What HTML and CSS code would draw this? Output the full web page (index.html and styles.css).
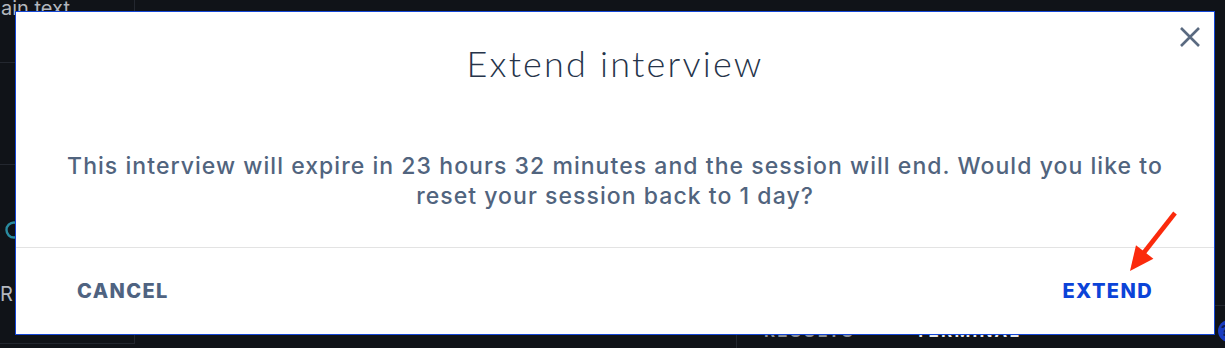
FILE: index.html
```html
<!DOCTYPE html>
<html lang="en">
<head>
<meta charset="utf-8">
<title>Extend interview</title>
<link rel="stylesheet" href="styles.css">
</head>
<body>
<div class="app">
  <aside class="sidebar">
    <div class="side-section side-top"><span class="side-label">ain text</span></div>
    <div class="side-section side-mid"></div>
    <div class="side-section side-bottom">
      <svg class="side-icon" width="20" height="20" viewBox="0 0 20 20"><circle cx="10" cy="10" r="7.5" fill="none" stroke="#2a8ba0" stroke-width="2.4"/></svg>
      <span class="side-label side-r">R</span>
    </div>
  </aside>
  <main class="main">
    <div class="workspace"></div>
    <div class="bottom-row">
      <div class="bottom-left"></div>
      <div class="tabbar">
        <span class="tab">RESULTS</span>
        <span class="tab tab-active">TERMINAL</span>
        <span class="help">?</span>
      </div>
    </div>
  </main>
</div>

<div class="modal" role="dialog" aria-labelledby="modal-title">
  <button class="modal-close" aria-label="Close">
    <svg width="22" height="22" viewBox="0 0 22 22"><path d="M2 2 L20 20 M20 2 L2 20" stroke="#5a6a80" stroke-width="2.6" stroke-linecap="butt" fill="none"/></svg>
  </button>
  <header class="modal-header">
    <h2 id="modal-title" class="modal-title">Extend interview</h2>
  </header>
  <div class="modal-body">
    <p class="modal-text">This interview will expire in 23 hours 32 minutes and the session will end. Would you like to reset your session back to 1 day?</p>
  </div>
  <footer class="modal-footer">
    <button class="btn btn-cancel">CANCEL</button>
    <button class="btn btn-extend">EXTEND</button>
  </footer>
</div>

<svg class="annotation" width="64" height="76" viewBox="0 0 64 76">
  <line x1="55" y1="8" x2="22" y2="50" stroke="#fb2a0c" stroke-width="4.6"/>
  <polygon points="10,66 33.4,53.7 16,40.3" fill="#fb2a0c"/>
</svg>
</body>
</html>
```

FILE: styles.css
```css
* { box-sizing: border-box; }
html, body { margin: 0; padding: 0; }
body {
  width: 1225px;
  height: 348px;
  overflow: hidden;
  background: #101318;
  font-family: Inter, "Noto Sans", sans-serif;
}

.app {
  display: grid;
  grid-template-columns: 135px 1fr;
  height: 348px;
}

.sidebar {
  display: flex;
  flex-direction: column;
  height: 344px;
  border-right: 1px solid #23272f;
  border-bottom: 1px solid #23272f;
  overflow: hidden;
}
.side-section { border-bottom: 1px solid #23272f; }
.side-top { height: 63px; }
.side-mid { height: 102px; }
.side-bottom {
  flex: 1;
  border-bottom: none;
  display: flex;
  flex-direction: column;
  padding-top: 55px;
}
.side-label {
  display: block;
  color: #b3b7be;
  font-size: 20px;
  line-height: 20px;
  margin-top: -2px;
  padding-left: 1px;
}
.side-icon { margin-left: 4px; }
.side-r { margin-top: 44px; padding-left: 0; }

.main { display: flex; flex-direction: column; }
.workspace { flex: 1; }
.bottom-row { display: flex; height: 43px; }
.bottom-left { width: 601px; }
.tabbar {
  flex: 1;
  display: flex;
  align-items: flex-end;
  gap: 60px;
  padding: 0 0 8px 27px;
  border-left: 1px solid #23272f;
  border-top: 1px solid #23272f;
  position: relative;
}
.tab {
  font-size: 17px;
  font-weight: 700;
  letter-spacing: 2.2px;
  color: #8a8f98;
  line-height: 17px;
}
.tab-active { color: #e8eaee; }
.help {
  position: absolute;
  left: 481px;
  top: 14px;
  width: 22px;
  height: 22px;
  border-radius: 50%;
  background: #1a3cc2;
  color: #0b1a55;
  font-size: 15px;
  font-weight: 700;
  line-height: 22px;
  padding-left: 3px;
}

.modal {
  position: fixed;
  left: 15px;
  top: 11px;
  width: 1200px;
  height: 324px;
  background: #fff;
  border: 1px solid #1446d6;
  display: flex;
  flex-direction: column;
}
.modal-close {
  position: absolute;
  right: 13px;
  top: 14px;
  padding: 0;
  border: 0;
  background: none;
  width: 22px;
  height: 22px;
}
.modal-close svg { display: block; }
.modal-header { padding-top: 29px; text-align: center; }
.modal-title {
  margin: 0;
  font-family: Lato, Inter, sans-serif;
  font-size: 36px;
  line-height: 44px;
  font-weight: 300;
  letter-spacing: 2.2px;
  color: #26344a;
}
.modal-body { padding: 66px 42px 36px; }
.modal-text {
  margin: 0;
  text-align: center;
  font-size: 23px;
  line-height: 30px;
  font-weight: 500;
  letter-spacing: 1.05px;
  color: #51647e;
}
.modal-footer {
  flex: 1;
  border-top: 1px solid #e3e3e3;
  display: flex;
  align-items: center;
  justify-content: space-between;
  padding: 0 61px;
}
.btn {
  border: 0;
  background: none;
  padding: 0;
  font-family: Inter, "Noto Sans", sans-serif;
  font-size: 20px;
  line-height: 24px;
  font-weight: 800;
  letter-spacing: 1.4px;
}
.btn-cancel { color: #4f6381; }
.btn-extend { color: #0b43d8; }

.annotation {
  position: fixed;
  left: 1120px;
  top: 205px;
}
```
